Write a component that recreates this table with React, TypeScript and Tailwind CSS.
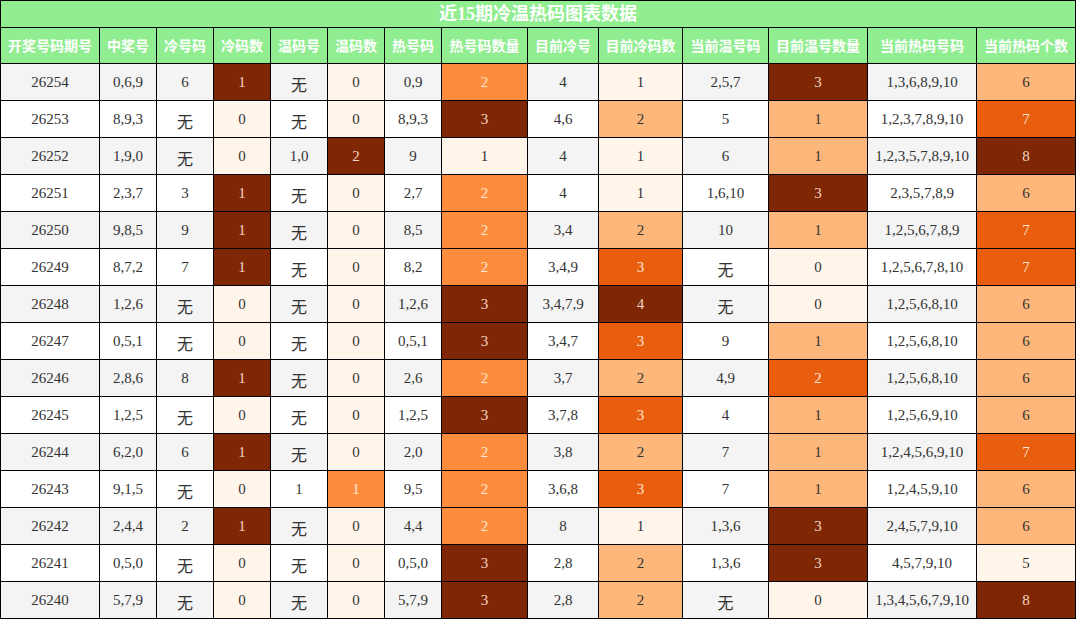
import React from "react";

const headers = ["开奖号码期号","中奖号","冷号码","冷码数","温码号","温码数","热号码","热号码数量","目前冷号","目前冷码数","当前温号码","目前温号数量","当前热码号码","当前热码个数"];

const rows: string[][] = [
["26254","0,6,9","6","1","无","0","0,9","2","4","1","2,5,7","3","1,3,6,8,9,10","6"],
["26253","8,9,3","无","0","无","0","8,9,3","3","4,6","2","5","1","1,2,3,7,8,9,10","7"],
["26252","1,9,0","无","0","1,0","2","9","1","4","1","6","1","1,2,3,5,7,8,9,10","8"],
["26251","2,3,7","3","1","无","0","2,7","2","4","1","1,6,10","3","2,3,5,7,8,9","6"],
["26250","9,8,5","9","1","无","0","8,5","2","3,4","2","10","1","1,2,5,6,7,8,9","7"],
["26249","8,7,2","7","1","无","0","8,2","2","3,4,9","3","无","0","1,2,5,6,7,8,10","7"],
["26248","1,2,6","无","0","无","0","1,2,6","3","3,4,7,9","4","无","0","1,2,5,6,8,10","6"],
["26247","0,5,1","无","0","无","0","0,5,1","3","3,4,7","3","9","1","1,2,5,6,8,10","6"],
["26246","2,8,6","8","1","无","0","2,6","2","3,7","2","4,9","2","1,2,5,6,8,10","6"],
["26245","1,2,5","无","0","无","0","1,2,5","3","3,7,8","3","4","1","1,2,5,6,9,10","6"],
["26244","6,2,0","6","1","无","0","2,0","2","3,8","2","7","1","1,2,4,5,6,9,10","7"],
["26243","9,1,5","无","0","1","1","9,5","2","3,6,8","3","7","1","1,2,4,5,9,10","6"],
["26242","2,4,4","2","1","无","0","4,4","2","8","1","1,3,6","3","2,4,5,7,9,10","6"],
["26241","0,5,0","无","0","无","0","0,5,0","3","2,8","2","1,3,6","3","4,5,7,9,10","5"],
["26240","5,7,9","无","0","无","0","5,7,9","3","2,8","2","无","0","1,3,4,5,6,7,9,10","8"],
];

const LIGHT = "bg-[#fff5eb] text-[#333333]";
const PEACH = "bg-[#fdb77b] text-[#333333]";
const ORANGE = "bg-[#fd8d3c] text-[#fde6d4]";
const DORANGE = "bg-[#e95d0e] text-[#fde6d4]";
const DARK = "bg-[#7f2704] text-[#f2d6c6]";

const colorMaps: Record<number, Record<string, string>> = {
  3: { "0": LIGHT, "1": DARK },
  5: { "0": LIGHT, "1": ORANGE, "2": DARK },
  7: { "1": LIGHT, "2": ORANGE, "3": DARK },
  9: { "1": LIGHT, "2": PEACH, "3": DORANGE, "4": DARK },
  11: { "0": LIGHT, "1": PEACH, "2": DORANGE, "3": DARK },
  13: { "5": LIGHT, "6": PEACH, "7": DORANGE, "8": DARK },
};

export default function App() {
  return (
    <div className="w-[1076px] h-[619px] bg-black p-[1px] overflow-hidden font-['Liberation_Serif','Noto_Sans_CJK_SC',serif]">
      <div className="grid gap-[1px] grid-cols-[98px_56px_56px_56px_56px_56px_56px_85px_70px_83px_85px_98px_108px_98px] grid-rows-[26px_35px_repeat(15,36px)]">
        <div className="col-span-14 bg-[#90ee90] flex items-center justify-center text-white text-[18px] font-bold leading-none font-['Liberation_Serif','Noto_Sans_CJK_SC',sans-serif]">
          近15期冷温热码图表数据
        </div>
        {headers.map((h, i) => (
          <div
            key={i}
            className="bg-[#90ee90] flex items-center justify-center text-white text-[14px] font-bold whitespace-nowrap font-['Noto_Sans_CJK_SC',sans-serif]"
          >
            {h}
          </div>
        ))}
        {rows.map((r, ri) =>
          r.map((c, ci) => {
            const base = ri % 2 === 0 ? "bg-[#f4f4f4] text-[#333333]" : "bg-white text-[#333333]";
            const cls = colorMaps[ci] ? colorMaps[ci][c] : base;
            const isWu = c === "无";
            return (
              <div
                key={ri + "-" + ci}
                className={`flex items-center justify-center whitespace-nowrap ${
                  isWu ? "text-[16px] pt-[3px] font-['Noto_Sans_CJK_SC',sans-serif]" : "text-[15px]"
                } ${cls}`}
              >
                {c}
              </div>
            );
          })
        )}
      </div>
    </div>
  );
}
